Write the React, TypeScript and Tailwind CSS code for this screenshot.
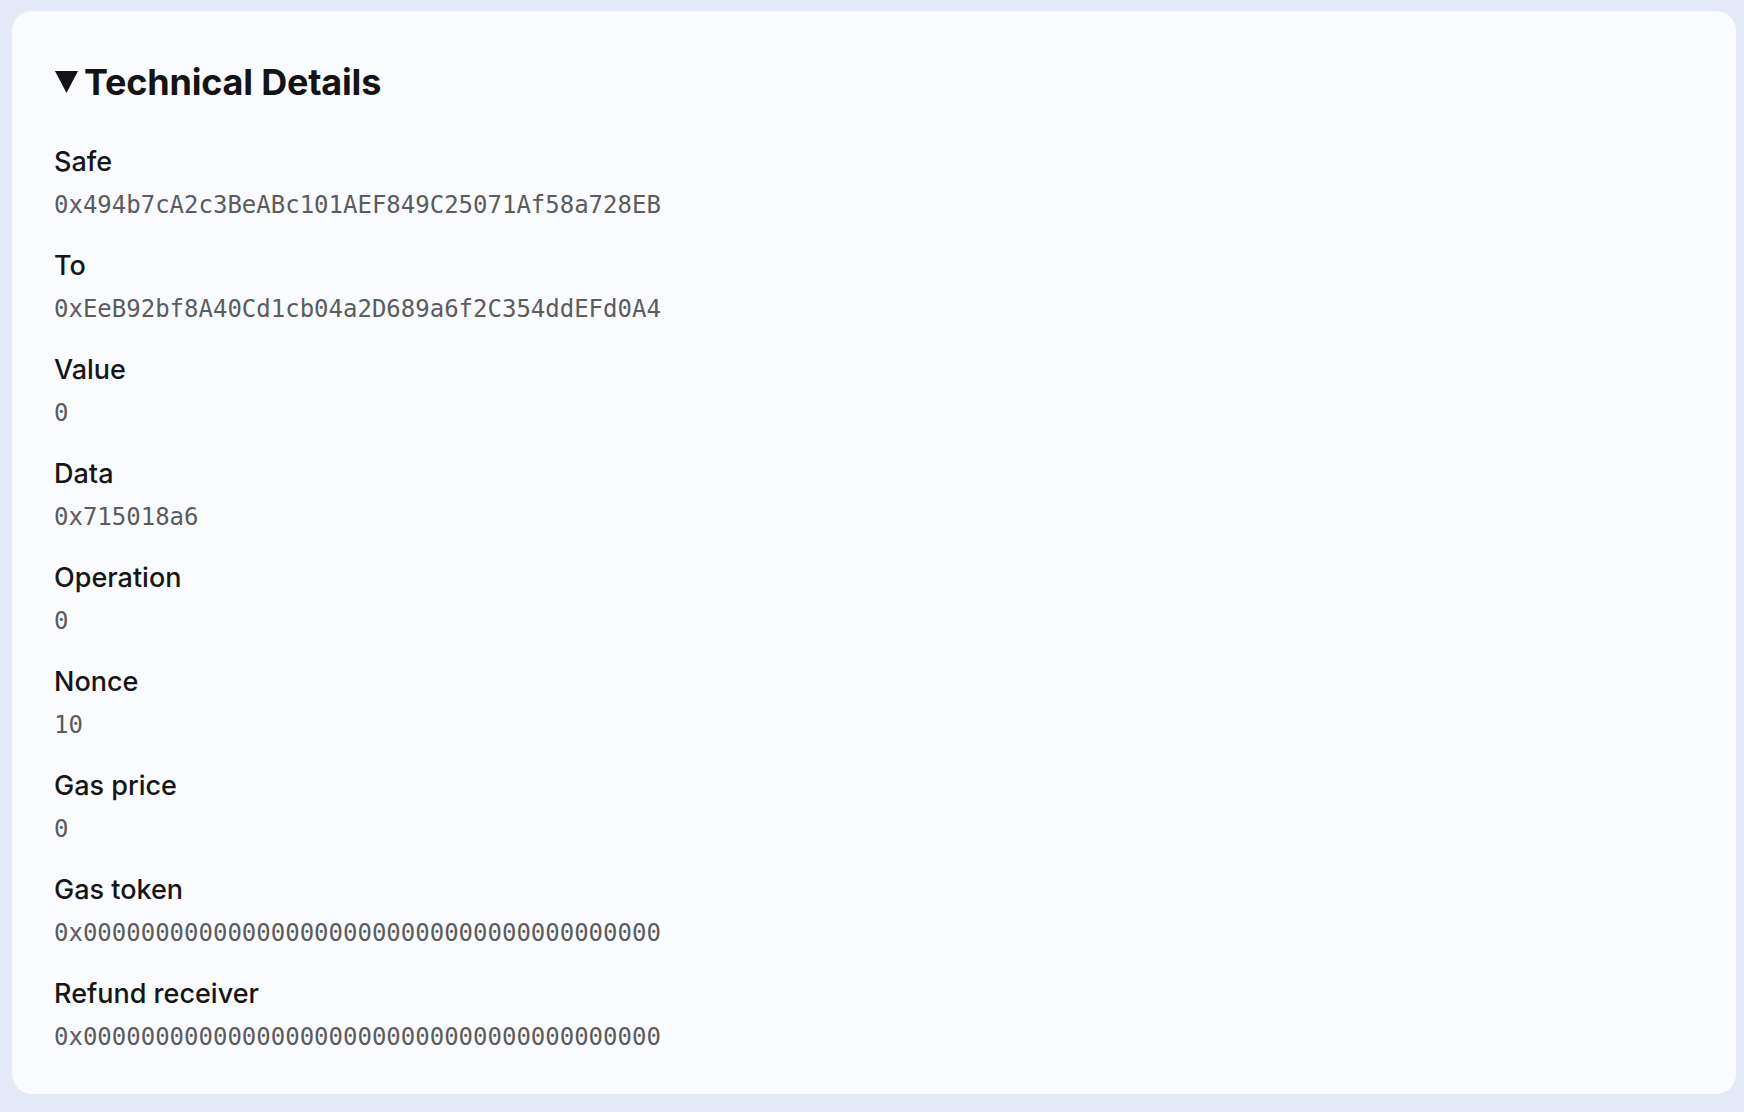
import { Fragment } from 'react';

const rows: { label: string; value: string }[] = [
  { label: 'Safe', value: '0x494b7cA2c3BeABc101AEF849C25071Af58a728EB' },
  { label: 'To', value: '0xEeB92bf8A40Cd1cb04a2D689a6f2C354ddEFd0A4' },
  { label: 'Value', value: '0' },
  { label: 'Data', value: '0x715018a6' },
  { label: 'Operation', value: '0' },
  { label: 'Nonce', value: '10' },
  { label: 'Gas price', value: '0' },
  { label: 'Gas token', value: '0x0000000000000000000000000000000000000000' },
  { label: 'Refund receiver', value: '0x0000000000000000000000000000000000000000' },
];

export default function App() {
  return (
    <div className="h-[1112px] w-full overflow-hidden bg-[#e4e9f8] pl-[12px] pr-[8px] pt-[11px] font-['Inter',sans-serif]">
      <div className="h-[1083px] rounded-[20px] bg-[#f9fbfe] pl-[42px] pr-10 pt-[49px]">
        <div className="flex items-center gap-[6px] text-[36px] font-bold leading-[44px] text-[#141414]">
          <svg width="23" height="23" viewBox="0 0 23 23" className="mt-[-2px] ml-[1px]">
            <path d="M0 1h23L11.5 23z" fill="#141414" />
          </svg>
          <span className="tracking-[-0.2px]">Technical Details</span>
        </div>
        <dl className="mt-[41px] flex flex-col gap-[27px]">
          {rows.map((r) => (
            <Fragment key={r.label}>
              <div className="flex flex-col gap-[9px]">
                <dt className="text-[27px] font-medium leading-[34px] text-[#161616]">{r.label}</dt>
                <dd className="font-['DejaVu_Sans_Mono',monospace] text-[24px] leading-[34px] text-[#5c5c5c]">
                  {r.value}
                </dd>
              </div>
            </Fragment>
          ))}
        </dl>
      </div>
    </div>
  );
}
